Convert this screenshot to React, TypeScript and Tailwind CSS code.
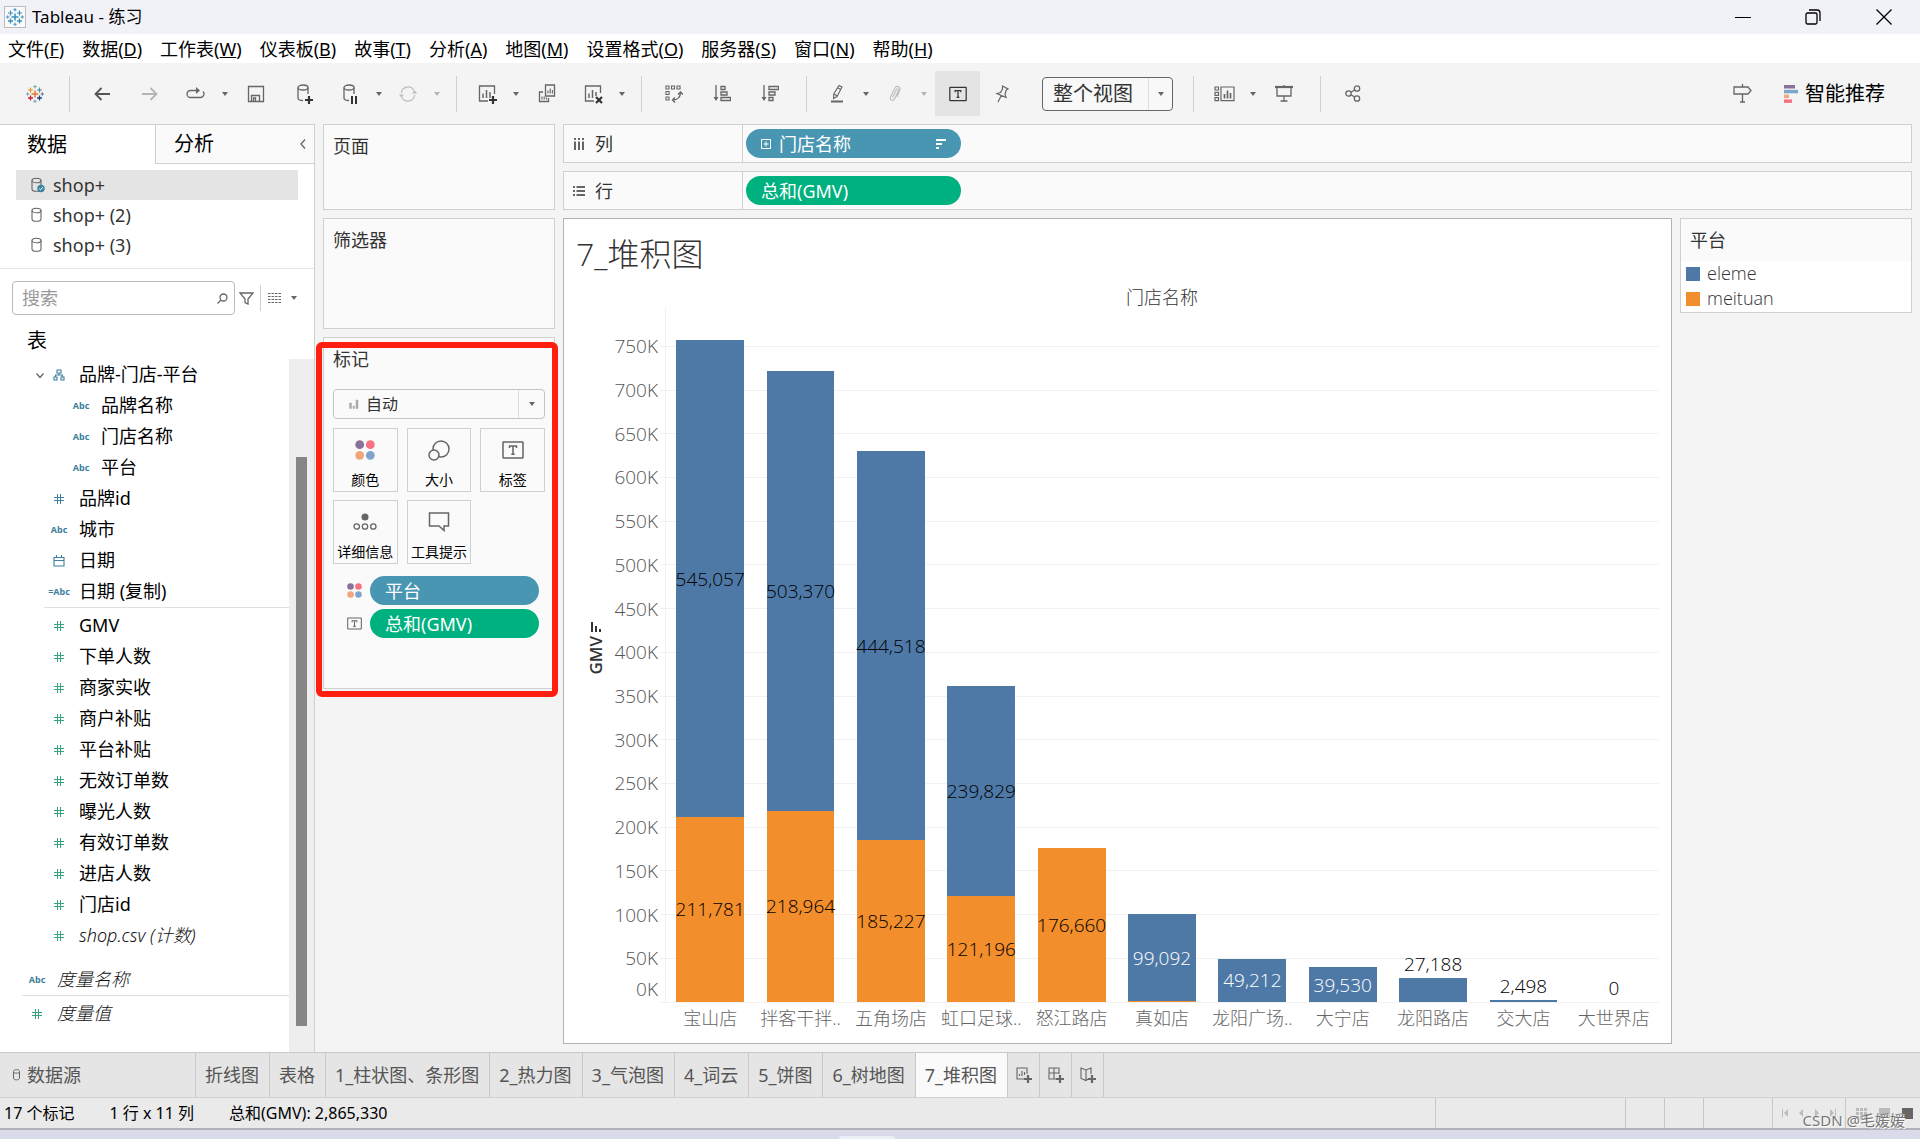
import { useState } from "react";
import type { ReactNode } from "react";
import clsx from "clsx";

type FieldKind = "tree" | "abc" | "calc" | "num" | "date" | "measure";

type Field = {
  name: string;
  kind: FieldKind;
  child?: boolean;
  italic?: boolean;
};

const menus = [
  ["文件", "F"],
  ["数据", "D"],
  ["工作表", "W"],
  ["仪表板", "B"],
  ["故事", "T"],
  ["分析", "A"],
  ["地图", "M"],
  ["设置格式", "O"],
  ["服务器", "S"],
  ["窗口", "N"],
  ["帮助", "H"],
];

const sources = ["shop+", "shop+ (2)", "shop+ (3)"];

const dimensions: Field[] = [
  { name: "品牌-门店-平台", kind: "tree" },
  { name: "品牌名称", kind: "abc", child: true },
  { name: "门店名称", kind: "abc", child: true },
  { name: "平台", kind: "abc", child: true },
  { name: "品牌id", kind: "num" },
  { name: "城市", kind: "abc" },
  { name: "日期", kind: "date" },
  { name: "日期 (复制)", kind: "calc" },
];

const measures: Field[] = [
  { name: "GMV", kind: "measure" },
  { name: "下单人数", kind: "measure" },
  { name: "商家实收", kind: "measure" },
  { name: "商户补贴", kind: "measure" },
  { name: "平台补贴", kind: "measure" },
  { name: "无效订单数", kind: "measure" },
  { name: "曝光人数", kind: "measure" },
  { name: "有效订单数", kind: "measure" },
  { name: "进店人数", kind: "measure" },
  { name: "门店id", kind: "measure" },
  { name: "shop.csv (计数)", kind: "measure", italic: true },
];

const sheets = [
  "折线图",
  "表格",
  "1_柱状图、条形图",
  "2_热力图",
  "3_气泡图",
  "4_词云",
  "5_饼图",
  "6_树地图",
  "7_堆积图",
];

const stores = [
  { name: "宝山店", eleme: 545057, meituan: 211781 },
  { name: "拌客干拌..", eleme: 503370, meituan: 218964 },
  { name: "五角场店", eleme: 444518, meituan: 185227 },
  { name: "虹口足球..", eleme: 239829, meituan: 121196 },
  { name: "怒江路店", eleme: 0, meituan: 176660 },
  { name: "真如店", eleme: 99092, meituan: 1208 },
  { name: "龙阳广场..", eleme: 49212, meituan: 0 },
  { name: "大宁店", eleme: 39530, meituan: 0 },
  { name: "龙阳路店", eleme: 27188, meituan: 0 },
  { name: "交大店", eleme: 2498, meituan: 0 },
  { name: "大世界店", eleme: 0, meituan: 0 },
];

const AXIS_MAX = 795000;
const ticks = Array.from({ length: 16 }, (_, i) => i * 50);

const pct = (n: number) => `${n * 100}%`;
const yOf = (value: number) => pct(1 - value / AXIS_MAX);

/* ---------- icons ---------- */

function Svg({
  w,
  h,
  className = "text-[#666]",
  children,
}: {
  w: number;
  h: number;
  className?: string;
  children: ReactNode;
}) {
  return (
    <svg
      width={w}
      height={h}
      viewBox={`0 0 ${w} ${h}`}
      fill="none"
      stroke="currentColor"
      strokeWidth="1.3"
      className={clsx("shrink-0", className)}
      aria-hidden="true"
    >
      {children}
    </svg>
  );
}

function Caret({ className = "text-[#666]" }: { className?: string }) {
  return (
    <Svg w={6} h={4} className={className}>
      <path d="M0 0h6L3 4z" fill="currentColor" stroke="none" />
    </Svg>
  );
}

function TableauMark({ mono = false }: { mono?: boolean }) {
  const c = (color: string) => (mono ? "#3a8fc0" : color);
  return (
    <Svg w={18} h={18}>
      <path d="M9 5.500v7M5.500 9h7" stroke={c("#e8762d")} strokeWidth="1.5" />
      <path d="M4.500 2.500v5M2 5h5" stroke={c("#eb912c")} strokeWidth="1.2" />
      <path d="M13.500 2.500v5M11 5h5" stroke={c("#59879b")} strokeWidth="1.2" />
      <path d="M4.500 10.500v5M2 13h5" stroke={c("#c72037")} strokeWidth="1.3" />
      <path d="M13.500 10.500v5M11 13h5" stroke={c("#1f447e")} strokeWidth="1.3" />
      <path d="M9 0v3.500M7.300 1.700h3.400" stroke={c("#7099a6")} strokeWidth="0.9" />
      <path d="M9 14.500V18M7.300 16.300h3.400" stroke={c("#7099a6")} strokeWidth="0.9" />
      <path d="M1.700 7.300v3.400M0 9h3.400" stroke={c("#7099a6")} strokeWidth="0.9" />
      <path d="M16.300 7.300v3.400M14.600 9H18" stroke={c("#5b6591")} strokeWidth="0.9" />
    </Svg>
  );
}

function Cylinder({ checked = false }: { checked?: boolean }) {
  return (
    <Svg w={14} h={16}>
      <ellipse cx="5.500" cy="3.500" rx="4.500" ry="2.300" strokeWidth="1.100" />
      <path d="M1 3.500v8.500c0 1.300 2 2.300 4.500 2.300S10 13.300 10 12V3.500" strokeWidth="1.100" />
      {checked && (
        <>
          <circle cx="10" cy="11.500" r="3.700" fill="#3a84a3" stroke="none" />
          <path d="M8.200 11.500l1.400 1.400 2.300-2.800" stroke="#fff" strokeWidth="1" />
        </>
      )}
    </Svg>
  );
}

function ColorDots({ size }: { size: number }) {
  return (
    <svg width={size} height={size} viewBox="0 0 20 20" aria-hidden="true">
      <circle cx="4.700" cy="4.700" r="4.400" fill="#8a7199" />
      <circle cx="15.300" cy="4.700" r="4.400" fill="#f87182" />
      <circle cx="4.700" cy="15.300" r="4.400" fill="#f2a47a" />
      <circle cx="15.300" cy="15.300" r="4.400" fill="#80a5cd" />
    </svg>
  );
}

function TextBox({ w, h }: { w: number; h: number }) {
  return (
    <svg
      width={w}
      height={h}
      viewBox="0 0 22 18"
      fill="none"
      stroke="currentColor"
      strokeWidth="1.5"
      aria-hidden="true"
    >
      <rect x="1" y="1" width="20" height="16" rx="0.500" />
      <path d="M7.500 7V5h7v2M11 5v8M9.300 13.200h3.400" />
    </svg>
  );
}

const plus = <path d="M14 12v8M10 16h8" stroke="#333" strokeWidth="2.200" />;

const icons = {
  back: (
    <Svg w={16} h={14} className="text-[#555]">
      <path d="M16 7H1.500M7.500 1L1.500 7l6 6" strokeWidth="1.800" />
    </Svg>
  ),
  forward: (
    <Svg w={16} h={14} className="text-[#b4b4b4]">
      <path d="M0 7h14.500M8.500 1l6 6-6 6" strokeWidth="1.800" />
    </Svg>
  ),
  redo: (
    <Svg w={20} h={14}>
      <path d="M11 3.500H4.500a3.500 3.500 0 0 0 0 7h10a3.500 3.500 0 0 0 2.500-6" />
      <path d="M10 0l4 3.500L10 7z" fill="currentColor" stroke="none" />
    </Svg>
  ),
  save: (
    <Svg w={18} h={18}>
      <path d="M1.500 1.500h15v15h-15z" />
      <path d="M4.500 16v-5.500h8V16M6.500 16v-3h2v3" />
    </Svg>
  ),
  addSource: (
    <Svg w={18} h={20}>
      <ellipse cx="8" cy="3.500" rx="5" ry="2.500" />
      <path d="M3 3.500V14c0 1.500 2 2.500 5 2.500M13 3.500V10" />
      {plus}
    </Svg>
  ),
  pause: (
    <Svg w={18} h={20}>
      <ellipse cx="8" cy="3.500" rx="5" ry="2.500" />
      <path d="M3 3.500V14c0 1.500 2 2.500 5 2.500M13 3.500V10" />
      <path d="M11 12v8M15 12v8" stroke="#333" strokeWidth="2" />
    </Svg>
  ),
  refresh: (
    <Svg w={18} h={18} className="text-[#bdbdbd]">
      <path d="M2.300 8A6.800 6.800 0 0 1 15 5.500M15.700 10A6.800 6.800 0 0 1 3 12.500" />
      <path d="M13 8.500l2.800-3.300L18 8.500zM0 9.500h5L2.300 12.800z" fill="currentColor" stroke="none" />
    </Svg>
  ),
  newSheet: (
    <Svg w={19} h={20}>
      <path d="M16.500 10V2h-15v15H10" />
      <path d="M5 14V9.500M8.500 14V6M12 14V8" strokeWidth="1.500" />
      <path d="M15 12v8M11 16h8" stroke="#333" strokeWidth="2.200" />
    </Svg>
  ),
  duplicate: (
    <Svg w={18} h={19}>
      <path d="M7.500 1h9v11h-9z" />
      <path d="M5 8H1.500v9.500h9V14" />
      <path d="M10 9.500v-3M12.200 9.500v-5M14.400 9.500v-3.500M4 15.500v-3M6.200 15.500v-3M8.400 15.500v-2" strokeWidth="1.100" />
    </Svg>
  ),
  clearSheet: (
    <Svg w={19} h={20}>
      <path d="M16.500 9V2h-15v15H10" />
      <path d="M5 14V9.500M8.500 14V6M12 12V8" strokeWidth="1.500" />
      <path d="M12 13l6 6M18 13l-6 6" stroke="#333" strokeWidth="2.200" />
    </Svg>
  ),
  swap: (
    <Svg w={18} h={18}>
      <path d="M1 1h3v3H1zM6.500 1h3v3h-3zM12 1h3v3h-3zM1 6.500h3v3H1zM1 12h3v3H1z" strokeWidth="1.100" />
      <path d="M15.500 7c0 5-3 8-8 8M13 9.500L15.500 7 18 9.500M10 12.500L7.500 15l2.500 2.500" />
    </Svg>
  ),
  sortAsc: (
    <Svg w={18} h={17}>
      <path d="M3 0v15" />
      <path d="M0.500 12h5L3 16z" fill="currentColor" stroke="none" />
      <path d="M8 1.500h4v3H8zM8 7h6v3H8zM8 12.500h9.500v3H8z" />
    </Svg>
  ),
  sortDesc: (
    <Svg w={18} h={17}>
      <path d="M3 0v15" />
      <path d="M0.500 12h5L3 16z" fill="currentColor" stroke="none" />
      <path d="M8 1.500h9.500v3H8zM8 7h6v3H8zM8 12.500h4v3H8z" />
    </Svg>
  ),
  pen: (
    <Svg w={14} h={19}>
      <path d="M9 1.500l3 1.500-5 9.500-3.500 2 .3-4.500zM8 4l3 1.500M3.800 10l3.200 1.800" strokeWidth="1.100" />
      <path d="M1 17.500h12" strokeWidth="2" />
    </Svg>
  ),
  clip: (
    <Svg w={14} h={18} className="text-[#bbb]">
      <path d="M4.500 12.500L8.500 4.500c.8-1.500 2.800-.5 2 1L6.500 14c-1.300 2.500-5.500 1-4-2L7 3c1.500-3 6-1.300 4.800 2L9 12" strokeWidth="1.100" />
    </Svg>
  ),
  pin: (
    <Svg w={14} h={18}>
      <path d="M7.500 1l5.500 3-1.700 1-1.300 4.300 1 3.200L2 8.500l3.500-1L7.500 4zM6.300 10.500L3 17" strokeWidth="1.200" />
    </Svg>
  ),
  cards: (
    <Svg w={21} h={16}>
      <path d="M1 1h3.500v3H1zM1 6.300h3.500v3H1zM1 11.700h3.500v3H1zM7 1h13v13.700H7z" strokeWidth="1.200" />
      <path d="M10.500 12.500V8M13.500 12.500v-8M16.500 12.500V7" strokeWidth="1.700" />
    </Svg>
  ),
  present: (
    <Svg w={18} h={17}>
      <path d="M0 2h18" strokeWidth="2.200" />
      <path d="M2 3v8h14V3M9 0v2M9 11v5M5.500 16h7" />
    </Svg>
  ),
  share: (
    <Svg w={16} h={17}>
      <circle cx="3.500" cy="8.500" r="2.700" />
      <circle cx="12" cy="3.500" r="2.700" />
      <circle cx="12" cy="13.500" r="2.700" />
      <path d="M6 7.200L9.600 5M6 9.800l3.600 2.200" />
    </Svg>
  ),
  guide: (
    <Svg w={19} h={19}>
      <path d="M1 3h14l3 3.500L15 10H1zM9.500 0v3M9.500 10v8M7 18h5" />
    </Svg>
  ),
};

function FieldIcon({ kind }: { kind: FieldKind }) {
  if (kind === "abc" || kind === "calc") {
    return (
      <span className="font-['Noto_Sans'] text-[9px] font-bold text-[#3d7f9c]">
        {kind === "calc" ? "=Abc" : "Abc"}
      </span>
    );
  }
  if (kind === "tree") {
    return (
      <Svg w={12} h={12} className="text-[#3d7f9c]">
        <path d="M4 1h4v3H4zM1 8h3v3H1zM8 8h3v3H8zM6 4v2M2.500 8V6h7v2" strokeWidth="1.1" />
      </Svg>
    );
  }
  if (kind === "date") {
    return (
      <Svg w={12} h={12} className="text-[#3d7f9c]">
        <path d="M1 2.500h10v8.500H1zM1 5.500h10M3.500 0v3M8.500 0v3" strokeWidth="1.1" />
      </Svg>
    );
  }
  return (
    <Svg w={10} h={10} className={kind === "num" ? "text-[#3d7f9c]" : "text-[#37a37c]"}>
      <path d="M3.500 0v10M6.500 0v10M0 3.500h10M0 6.500h10" strokeWidth="1" />
    </Svg>
  );
}

/* ---------- toolbar ---------- */

function Tool({
  icon,
  label,
  wide = false,
}: {
  icon: keyof typeof icons;
  label: string;
  wide?: boolean;
}) {
  return (
    <button
      aria-label={label}
      className={clsx("flex h-11 items-center justify-center", wide ? "w-12" : "w-11")}
    >
      {icons[icon]}
    </button>
  );
}

function ToolCaret({ dim = false }: { dim?: boolean }) {
  return (
    <button aria-label="更多" className="flex h-11 w-3.5 items-center justify-center">
      <Caret className={dim ? "text-[#b4b4b4]" : "text-[#666]"} />
    </button>
  );
}

function Divider() {
  return <span className="mr-2 ml-3 h-9 w-px bg-[#d0d0d0]" />;
}

function Toolbar() {
  return (
    <div className="flex h-[61px] items-center bg-[#f4f4f4]">
      <button aria-label="开始" className="flex w-[57px] justify-center pl-3">
        <TableauMark />
      </button>
      <Divider />
      <Tool icon="back" label="后退" wide />
      <Tool icon="forward" label="前进" wide />
      <Tool icon="redo" label="重播" />
      <ToolCaret />
      <Tool icon="save" label="保存" wide />
      <Tool icon="addSource" label="新建数据源" wide />
      <Tool icon="pause" label="暂停自动更新" />
      <ToolCaret />
      <Tool icon="refresh" label="刷新" />
      <ToolCaret dim />
      <Divider />
      <Tool icon="newSheet" label="新建工作表" />
      <ToolCaret />
      <Tool icon="duplicate" label="复制" wide />
      <Tool icon="clearSheet" label="清除" />
      <ToolCaret />
      <Divider />
      <Tool icon="swap" label="交换行和列" wide />
      <Tool icon="sortAsc" label="升序" wide />
      <Tool icon="sortDesc" label="降序" wide />
      <Divider />
      <Tool icon="pen" label="突出显示" />
      <ToolCaret />
      <Tool icon="clip" label="组" />
      <ToolCaret dim />
      <button
        aria-label="显示标记标签"
        className="ml-1 flex h-[45px] w-[45px] items-center justify-center bg-[#e4e4e4] text-[#333]"
      >
        <TextBox w={18} h={16} />
      </button>
      <Tool icon="pin" label="固定" />
      <div className="relative mr-2 ml-[18px] w-[131px]">
        <select
          aria-label="适合"
          className="h-[34px] w-full appearance-none rounded-sm border border-[#666] bg-[#f8f8f8] pl-2.5 text-xl text-[#333]"
        >
          <option>整个视图</option>
        </select>
        <span className="pointer-events-none absolute inset-y-px right-px flex w-6 items-center justify-center border-l border-[#ddd]">
          <Caret />
        </span>
      </div>
      <Divider />
      <Tool icon="cards" label="显示/隐藏卡" />
      <ToolCaret />
      <Tool icon="present" label="演示模式" wide />
      <Divider />
      <Tool icon="share" label="共享" wide />
      <div className="ml-auto flex items-center gap-5 pr-[35px]">
        <Tool icon="guide" label="数据指南" />
        <button className="flex items-center gap-[7px] text-xl text-black">
          <svg width="14" height="18" aria-hidden="true">
            <path d="M0 0h11v3.500H0z" fill="#8a7199" />
            <path d="M0 4.800h14v3.500H0z" fill="#80a5cd" />
            <path d="M0 9.600h5v3.500H0z" fill="#f2a47a" />
            <path d="M0 14.400h8v3.500H0z" fill="#f87182" />
          </svg>
          智能推荐
        </button>
      </div>
    </div>
  );
}

/* ---------- left panel ---------- */

function FieldRow({ field, root = false }: { field: Field; root?: boolean }) {
  return (
    <li>
      <button
        className={clsx(
          "flex h-[31px] w-full items-center text-left text-lg text-black",
          root ? "pl-5" : field.child ? "pl-16" : "pl-[42px]"
        )}
      >
        <span className="flex w-[34px] shrink-0 items-center justify-center">
          <FieldIcon kind={field.kind} />
        </span>
        <span
          className={clsx(
            "pb-px pl-[3px] whitespace-nowrap",
            field.italic && "font-light text-[#111] italic"
          )}
        >
          {field.name}
        </span>
      </button>
    </li>
  );
}

function DataPane() {
  const [source, setSource] = useState("shop+");

  return (
    <aside className="flex w-[315px] shrink-0 flex-col border-t border-r border-[#d0d0d0] bg-white">
      <div className="flex h-[39px] text-xl text-black">
        <button className="w-[155px] pl-[27px] text-left">数据</button>
        <button className="flex flex-1 items-center justify-between border-b border-l border-[#d0d0d0] bg-[#fafafa] pr-2 pl-[18px]">
          分析
          <Svg w={6} h={10}>
            <path d="M5 0.500L1 5l4 4.500" />
          </Svg>
        </button>
      </div>
      <div className="border-b border-[#e4e4e4] pt-1.5 pr-4 pb-2 pl-4">
        {sources.map((name) => (
          <button
            key={name}
            onClick={() => setSource(name)}
            className={clsx(
              "flex h-[30px] w-full items-center gap-2 pl-[15px] text-lg text-[#333]",
              source === name && "bg-[#e4e4e4]"
            )}
          >
            <Cylinder checked={source === name} />
            {name}
          </button>
        ))}
      </div>
      <div className="flex items-center pt-3 pl-3">
        <label className="flex h-[34px] w-[223px] items-center rounded-sm border border-[#bbb] pr-1.5 pl-[9px]">
          <input
            aria-label="搜索"
            placeholder="搜索"
            className="min-w-0 flex-1 text-lg outline-none placeholder:text-[#999]"
          />
          <Svg w={11} h={11}>
            <circle cx="6.500" cy="4.500" r="3.500" />
            <path d="M4 7L0.500 10.500" />
          </Svg>
        </label>
        <button aria-label="筛选" className="px-1">
          <Svg w={15} h={13}>
            <path d="M1 1h13L9 7v5l-3-1.500V7z" />
          </Svg>
        </button>
        <span className="ml-0.5 h-[26px] w-px bg-[#d0d0d0]" />
        <button aria-label="查看方式" className="flex items-center gap-2.5 pl-[7px]">
          <Svg w={13} h={10}>
            <path d="M0 0.500h13M0 3.500h13M0 6.500h13M0 9.500h13" strokeDasharray="2.500 1" strokeWidth="1" />
          </Svg>
          <Caret />
        </button>
      </div>
      <h2 className="h-11 pt-2.5 pl-[27px] text-xl leading-8 text-black">表</h2>
      <div className="flex flex-1">
        <div className="min-w-0 flex-1">
          <div className="flex">
            <Svg w={8} h={6} className="mt-3.5 ml-9 text-[#666]">
              <path d="M0.500 0.500L4 4.500l3.500-4" />
            </Svg>
            <ul className="-ml-11 flex-1">
              {dimensions.map((f) => (
                <FieldRow key={f.name} field={f} />
              ))}
            </ul>
          </div>
          <hr className="mb-0.5 ml-11 border-[#e0e0e0]" />
          <ul>
            {measures.map((f) => (
              <FieldRow key={f.name} field={f} />
            ))}
          </ul>
          <ul className="pt-[13px]">
            <FieldRow root field={{ name: "度量名称", kind: "abc", italic: true }} />
          </ul>
          <hr className="mb-0.5 ml-[22px] border-[#e0e0e0]" />
          <ul>
            <FieldRow root field={{ name: "度量值", kind: "measure", italic: true }} />
          </ul>
        </div>
        <div className="flex w-[25px] flex-col items-center bg-[#eee] pt-[98px] pb-[26px]">
          <div className="w-[11px] flex-1 bg-[#868686]" />
        </div>
      </div>
    </aside>
  );
}

/* ---------- cards ---------- */

function Card({
  title,
  className,
  children,
}: {
  title: string;
  className?: string;
  children?: ReactNode;
}) {
  return (
    <section className={clsx("border border-[#d0d0d0] bg-[#fafafa] px-[9px] pt-[7px]", className)}>
      <h3 className="text-lg leading-7 text-[#333]">{title}</h3>
      {children}
    </section>
  );
}

function MarkButton({ label, children }: { label: string; children: ReactNode }) {
  return (
    <button className="flex h-16 flex-col items-center justify-between border border-[#d0d0d0] pt-2.5 pb-px text-sm whitespace-nowrap text-black">
      <span className="flex h-[22px] items-center text-[#666]">{children}</span>
      {label}
    </button>
  );
}

function Pill({
  color,
  className,
  children,
}: {
  color: "blue" | "green";
  className?: string;
  children: ReactNode;
}) {
  return (
    <button
      className={clsx(
        "flex h-[29px] items-center rounded-full px-[15px] text-lg text-white",
        color === "blue" ? "bg-[#4996b2]" : "bg-[#00b180]",
        className
      )}
    >
      {children}
    </button>
  );
}

function MarksCard() {
  return (
    <div className="relative">
      <Card title="标记" className="h-[352px]">
        <div className="relative mt-4">
          <select
            aria-label="标记类型"
            className="h-[30px] w-full appearance-none rounded-sm border border-[#c4c4c4] bg-[#fafafa] pl-8 text-base text-[#333]"
          >
            <option>自动</option>
          </select>
          <span className="pointer-events-none absolute inset-y-0 left-4 flex items-center">
            <Svg w={10} h={10} className="text-[#aaa]">
              <path d="M0.500 4h2v5.500h-2zM4 7h1.500v2.500H4zM7 1h2v8.500H7z" fill="currentColor" strokeWidth="0.500" />
            </Svg>
          </span>
          <span className="pointer-events-none absolute inset-y-px right-px flex w-[26px] items-center justify-center border-l border-[#ddd]">
            <Caret />
          </span>
        </div>
        <div className="mt-[9px] grid grid-cols-3 gap-x-[9px] gap-y-2">
          <MarkButton label="颜色">
            <ColorDots size={20} />
          </MarkButton>
          <MarkButton label="大小">
            <Svg w={22} h={21}>
              <circle cx="13" cy="9" r="8" strokeWidth="1.500" />
              <circle cx="6" cy="15" r="5" fill="#fafafa" strokeWidth="1.500" />
            </Svg>
          </MarkButton>
          <MarkButton label="标签">
            <TextBox w={22} h={18} />
          </MarkButton>
          <MarkButton label="详细信息">
            <Svg w={24} h={18}>
              <circle cx="12" cy="4" r="3.500" fill="currentColor" stroke="none" />
              <circle cx="3.700" cy="13.500" r="2.700" />
              <circle cx="12" cy="13.500" r="2.700" />
              <circle cx="20.300" cy="13.500" r="2.700" />
            </Svg>
          </MarkButton>
          <MarkButton label="工具提示">
            <Svg w={22} h={20}>
              <path d="M1.500 1h19v13H16v4.500L11 14H1.500z" strokeWidth="1.500" />
            </Svg>
          </MarkButton>
        </div>
        <div className="mt-3 flex flex-col gap-1 pr-1.5 pl-3.5 text-[#666]">
          <div className="flex items-center gap-2">
            <ColorDots size={15} />
            <Pill color="blue" className="flex-1">
              平台
            </Pill>
          </div>
          <div className="flex items-center gap-2">
            <TextBox w={15} h={13} />
            <Pill color="green" className="flex-1">
              总和(GMV)
            </Pill>
          </div>
        </div>
      </Card>
      {/* highlight frame around the card */}
      <div className="pointer-events-none absolute top-[5px] -right-[3px] -bottom-2 -left-[7px] z-10 rounded-md border-[6px] border-[#ff1f10]" />
    </div>
  );
}

function Shelf({ label, icon, children }: { label: string; icon: ReactNode; children: ReactNode }) {
  return (
    <div className="flex h-[39px] items-center border border-[#d0d0d0] bg-[#fafafa]">
      <div className="flex h-full w-[179px] items-center gap-2.5 border-r border-[#d0d0d0] pl-[9px] text-lg text-[#333]">
        {icon}
        {label}
      </div>
      <div className="pl-[3px]">{children}</div>
    </div>
  );
}

/* ---------- chart ---------- */

function StackedBars() {
  const step = 1 / stores.length;

  return (
    <svg className="block h-full w-full overflow-visible" role="img" aria-label="GMV 堆积图">
      <g stroke="#f1f1f1" shapeRendering="crispEdges">
        {ticks.map((t) => (
          <line key={t} x1="-5" x2="100%" y1={yOf(t * 1000)} y2={yOf(t * 1000)} />
        ))}
        <line x1="0" x2="0" y1="0" y2="100%" />
      </g>
      {stores.map((s, i) => {
        const x = pct((i + 0.125) * step);
        const mid = pct((i + 0.5) * step);
        const total = s.eleme + s.meituan;
        const inside = total > 35000;
        const big = s.eleme > 200000;
        return (
          <g key={s.name} className="text-[19px] font-light">
            <rect
              x={x}
              y={yOf(s.meituan)}
              width={pct(step * 0.75)}
              height={pct(s.meituan / AXIS_MAX)}
              fill="#f28e2b"
              shapeRendering="crispEdges"
            />
            <rect
              x={x}
              y={yOf(total)}
              width={pct(step * 0.75)}
              height={pct(s.eleme / AXIS_MAX)}
              fill="#4e79a7"
              shapeRendering="crispEdges"
            />
            {s.meituan > 2000 && (
              <text x={mid} y={yOf(s.meituan / 2)} dy="7" textAnchor="middle" fill="#000">
                {s.meituan.toLocaleString("en-US")}
              </text>
            )}
            {(s.eleme > 0 || total === 0) && (
              <text
                x={mid}
                y={inside ? yOf(s.meituan + s.eleme / 2) : yOf(total)}
                dy={inside ? 7 : -7}
                textAnchor="middle"
                fill={inside && !big ? "#fff" : "#000"}
              >
                {s.eleme.toLocaleString("en-US")}
              </text>
            )}
          </g>
        );
      })}
    </svg>
  );
}

function ChartView() {
  return (
    <section className="flex min-w-0 flex-1 flex-col border border-[#b3b3b3] bg-white font-['Open_Sans','Noto_Sans_CJK_SC',sans-serif]">
      <h1 className="pt-3 pl-3 text-[32px] leading-[46px] font-light text-[#333]">7_堆积图</h1>
      <div className="flex flex-1 pt-2 pr-3 pl-4">
        <div className="flex w-8 flex-col items-center justify-center gap-1 pb-8 text-[#333]">
          <Svg w={10} h={10}>
            <path d="M1 0v10M5 4v6M9 7v3" stroke="#333" strokeWidth="2" />
          </Svg>
          <span className="rotate-180 text-[17px] leading-6 font-semibold [writing-mode:vertical-rl]">
            GMV
          </span>
        </div>
        <div className="flex w-[53px] flex-col pt-[22px] pb-[41px]">
          <svg className="block w-full flex-1 overflow-visible" aria-hidden="true">
            {ticks.map((t) => (
              <text
                key={t}
                x="46"
                y={yOf(t * 1000)}
                dy={t === 0 ? -6 : 7}
                textAnchor="end"
                fill="#555"
                className="text-[19px] font-light"
              >
                {t}K
              </text>
            ))}
          </svg>
        </div>
        <div className="flex min-w-0 flex-1 flex-col pb-2.5">
          <div className="h-[22px] text-center text-lg leading-6 font-light text-[#333]">
            门店名称
          </div>
          <div className="relative flex-1">
            <div className="absolute inset-0">
              <StackedBars />
            </div>
          </div>
          <div className="grid h-[31px] grid-cols-11 text-center text-lg leading-8 font-light whitespace-nowrap text-[#666]">
            {stores.map((s) => (
              <span key={s.name}>{s.name}</span>
            ))}
          </div>
        </div>
      </div>
    </section>
  );
}

function Legend() {
  return (
    <section className="w-[232px] shrink-0 self-start border border-[#d0d0d0] bg-white">
      <h3 className="bg-[#fafafa] pt-[7px] pb-[7px] pl-[9px] text-lg leading-7 text-[#333]">平台</h3>
      <ul className="pb-px pl-[5px] font-['Open_Sans',sans-serif] text-lg leading-[25px] font-light text-[#333]">
        <li className="flex items-center gap-[7px]">
          <span className="size-3.5 bg-[#4e79a7]" />
          eleme
        </li>
        <li className="flex items-center gap-[7px]">
          <span className="size-3.5 bg-[#f28e2b]" />
          meituan
        </li>
      </ul>
    </section>
  );
}

/* ---------- bottom bars ---------- */

function SheetTabs() {
  const [active, setActive] = useState("7_堆积图");
  const newTab = "flex w-8 items-center justify-center border-r border-[#c8c8c8]";

  return (
    <div className="flex h-[45px] border-t border-[#c8c8c8] bg-[#e5e5e5] text-lg text-[#555]">
      <button className="flex w-[196px] items-center gap-1 border-r border-[#c8c8c8] pl-[11px]">
        <svg width="12" height="14" fill="none" stroke="#666" aria-hidden="true">
          <path d="M2.500 3.500c0-2.500 6-2.500 6 0v6.500c0 2.500-6 2.500-6 0zM2.500 4c0 1.500 6 1.500 6 0" />
        </svg>
        数据源
      </button>
      {sheets.map((name) => (
        <button
          key={name}
          onClick={() => setActive(name)}
          className={clsx(
            "border-r border-[#c8c8c8] pr-2.5 pl-[9px] whitespace-nowrap",
            active === name && "bg-[#fafafa]"
          )}
        >
          {name}
        </button>
      ))}
      <button aria-label="新建工作表" className={newTab}>
        <Svg w={16} h={16}>
          <path d="M8 12H1V1h10v6M3.500 9V7M6 9V4M8.500 8V5" strokeWidth="1.100" />
          <path d="M12 8v8M8 12h8" strokeWidth="2.200" />
        </Svg>
      </button>
      <button aria-label="新建仪表板" className={newTab}>
        <Svg w={16} h={16}>
          <path d="M8 12H1V1h10v6M6 1v11M1 6h10" strokeWidth="1.100" />
          <path d="M12 8v8M8 12h8" strokeWidth="2.200" />
        </Svg>
      </button>
      <button aria-label="新建故事" className={newTab}>
        <Svg w={16} h={16}>
          <path d="M8 12L6 13.500 1 11.500V1l5 2 5-2v6M6 3v10.500" strokeWidth="1.100" />
          <path d="M12 8v8M8 12h8" strokeWidth="2.200" />
        </Svg>
      </button>
    </div>
  );
}

function StatusBar() {
  return (
    <footer className="relative flex h-[33px] border-t border-b-2 border-t-[#d0d0d0] border-b-[#b0b1bb] bg-[#eaeaea] text-base text-black">
      <div className="flex flex-1 items-center gap-[35px] pl-1 whitespace-nowrap">
        <span>17 个标记</span>
        <span>1 行 x 11 列</span>
        <span>总和(GMV): 2,865,330</span>
      </div>
      <span className="w-[190px] border-l border-[#c8c8c8]" />
      <span className="w-[39px] border-l border-[#c8c8c8]" />
      <span className="w-[39px] border-l border-[#c8c8c8]" />
      <span className="w-[69px] border-l border-[#c8c8c8]" />
      <span className="flex w-[73px] items-center justify-center border-l border-[#c8c8c8]">
        <svg width="54" height="8" fill="#bbb" aria-hidden="true">
          <path d="M0 0h1v8H0zM6 0v8L2 4zM21 0v8l-4-4zM33 0v8l4-4zM48 0v8l4-4zM53 0h1v8h-1z" />
        </svg>
      </span>
      <span className="flex w-[75px] items-center gap-3 border-l border-[#c8c8c8] pl-2.5">
        <svg width="11" height="11" fill="#bbb" aria-hidden="true">
          <path d="M0 0h3v3H0zM4 0h3v3H4zM8 0h3v3H8zM0 4h3v3H0zM4 4h3v3H4zM8 4h3v3H8zM0 8h3v3H0zM4 8h3v3H4zM8 8h3v3H8z" />
        </svg>
        <span className="size-[11px] bg-[#bbb]" />
        <span className="size-[11px] bg-[#666]" />
      </span>
      <span className="absolute right-[15px] -bottom-1 text-[15px] leading-6 text-[#777] [text-shadow:1px_1px_0_#fff]">
        CSDN @毛媛媛
      </span>
    </footer>
  );
}

export default function App() {
  return (
    <div className="flex min-h-screen flex-col bg-[#f4f4f4] font-['Noto_Sans','Noto_Sans_CJK_SC',sans-serif] leading-normal">
      <header className="flex h-[34px] items-center bg-[#f1f2f8] text-[17px] text-black">
        <span className="ml-1 flex size-[22px] items-center justify-center border border-[#bbb] bg-[#fafafa]">
          <TableauMark mono />
        </span>
        <span className="ml-1.5">Tableau - 练习</span>
        <div className="ml-auto flex">
          <button aria-label="最小化" className="flex w-[70px] items-center justify-center">
            <Svg w={16} h={16} className="text-black">
              <path d="M0 8.500h16" strokeWidth="1" />
            </Svg>
          </button>
          <button aria-label="还原" className="flex w-[70px] items-center justify-center">
            <Svg w={16} h={16} className="text-black">
              <rect x="1" y="4" width="11" height="11" rx="1.500" />
              <path d="M4 1h8c2 0 3 1 3 3v8" />
            </Svg>
          </button>
          <button aria-label="关闭" className="flex w-[72px] items-center justify-center">
            <Svg w={16} h={16} className="text-black">
              <path d="M0.500 0.500l15 15M15.500 0.500l-15 15" />
            </Svg>
          </button>
        </div>
      </header>
      <nav className="flex h-[29px] items-center gap-[18px] bg-white pl-2 text-lg text-black">
        {menus.map(([name, key]) => (
          <button key={key} className="whitespace-nowrap">
            {name}(<u>{key}</u>)
          </button>
        ))}
      </nav>
      <Toolbar />
      <div className="flex flex-1">
        <DataPane />
        <div className="flex min-w-0 flex-1 gap-2 pr-2 pb-2 pl-2">
          <div className="flex w-[232px] shrink-0 flex-col gap-2">
            <Card title="页面" className="h-[86px]" />
            <Card title="筛选器" className="h-[111px]" />
            <MarksCard />
          </div>
          <main className="flex min-w-0 flex-1 flex-col gap-2">
            <Shelf
              label="列"
              icon={
                <Svg w={12} h={12}>
                  <path d="M2 0v2M6 0v2M10 0v2M2 3.500v8.500M6 3.500v8.500M10 3.500v8.500" strokeWidth="2" />
                </Svg>
              }
            >
              <Pill color="blue" className="w-[215px] gap-2">
                <Svg w={10} h={10} className="text-white">
                  <path d="M0.500 0.500h9v9h-9zM5 2.500v5M2.500 5h5" strokeWidth="1" />
                </Svg>
                门店名称
                <Svg w={10} h={10} className="ml-auto text-white">
                  <path d="M0 1h10M0 5h6M0 9h3" strokeWidth="2" />
                </Svg>
              </Pill>
            </Shelf>
            <Shelf
              label="行"
              icon={
                <Svg w={12} h={12}>
                  <path d="M0 2h2M0 6h2M0 10h2M3.500 2H12M3.500 6H12M3.500 10H12" strokeWidth="2" />
                </Svg>
              }
            >
              <Pill color="green" className="w-[215px]">
                总和(GMV)
              </Pill>
            </Shelf>
            <div className="flex flex-1 gap-2">
              <ChartView />
              <Legend />
            </div>
          </main>
        </div>
      </div>
      <SheetTabs />
      <StatusBar />
      <div className="flex h-[9px] items-end bg-[#d9dbeb]">
        <span className="ml-[839px] h-[3px] w-14 rounded-t-sm bg-[#eceef6]" />
      </div>
    </div>
  );
}
